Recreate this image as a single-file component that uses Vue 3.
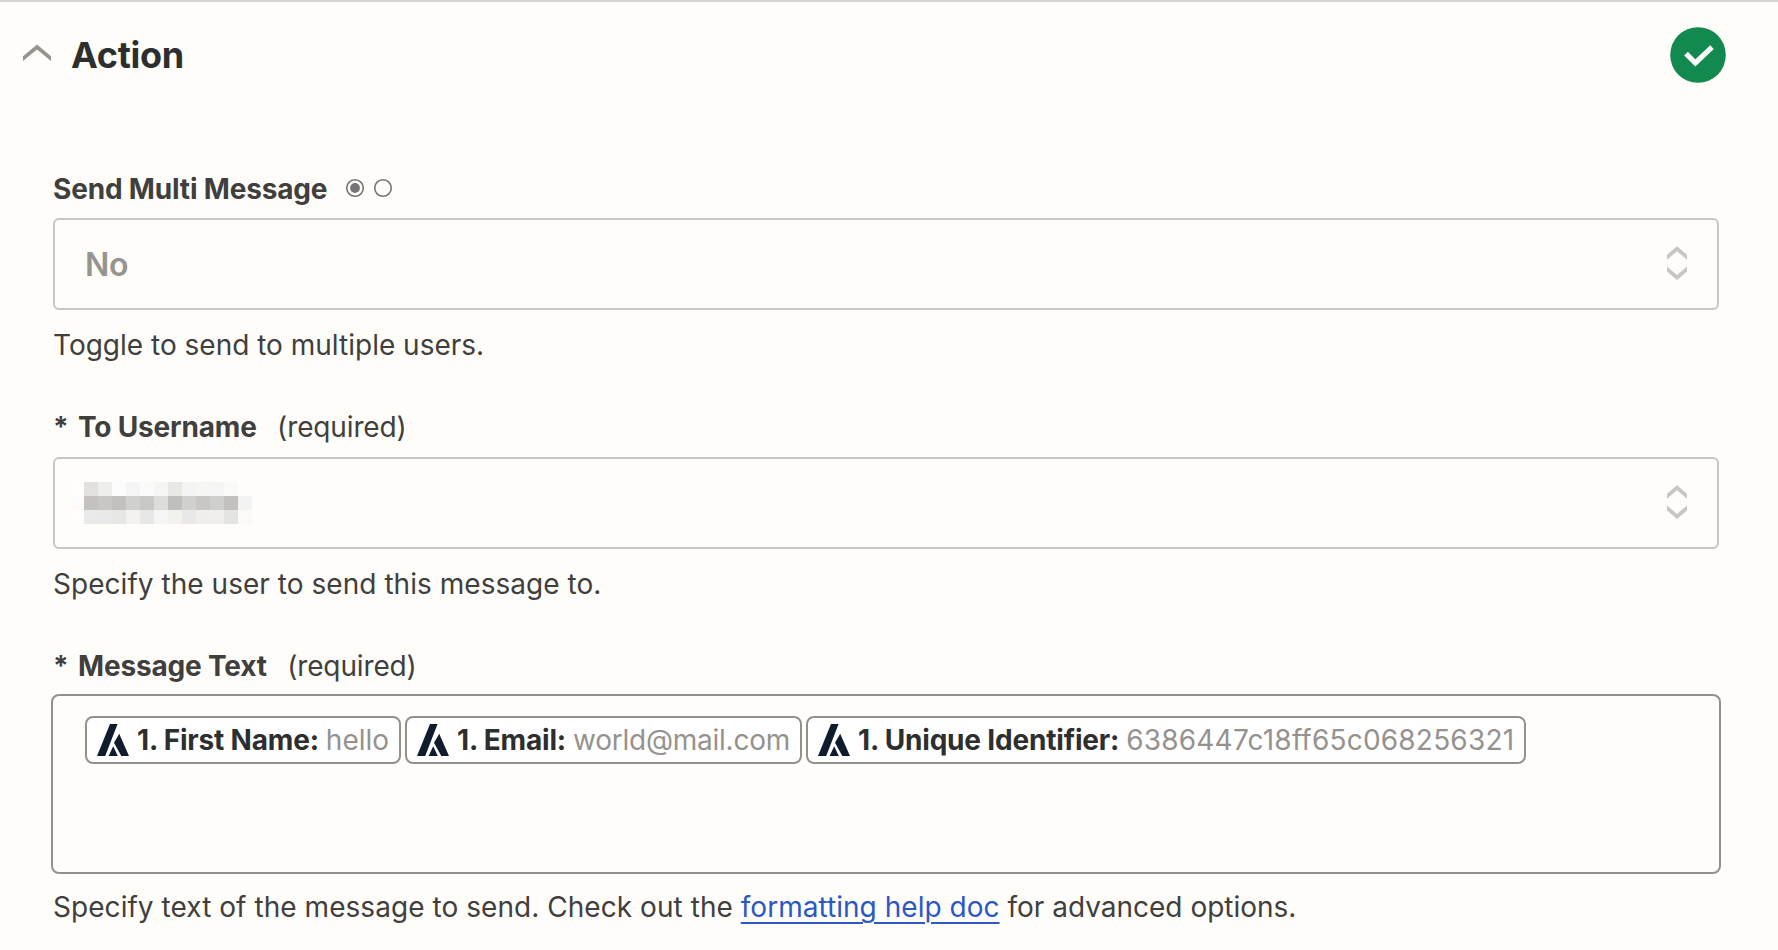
<script setup>
const chips = [
  { id: 'first', name: '1. First Name:', value: 'hello' },
  { id: 'email', name: '1. Email:', value: 'world@mail.com' },
  { id: 'unique', name: '1. Unique Identifier:', value: '6386447c18ff65c068256321' },
]

// Shades of the obscured user name, one entry per block
const mask = [
  '#fffefb', '#e2e1de', '#eeeeed', '#fcfcfc', '#f5f5f5', '#fafafa', '#f5f5f3', '#e8e8e5', '#f4f4f4', '#f6f6f3', '#f5f5f5', '#fafaf9', '#fffdf9',
  '#fbfbfb', '#c3c2be', '#c8c7c4', '#c2c1bd', '#d0d0cf', '#c8c8c7', '#dcdcdb', '#c0bfbe', '#d0d0cd', '#c8c7c3', '#cfcfcc', '#c2c1be', '#f3f3f3',
  '#fffefb', '#eaeaea', '#e9e9e9', '#e6e6e5', '#f3f2ef', '#e7e7e6', '#f5f5f5', '#f2f1ee', '#e8e8e8', '#efeeec', '#f0efed', '#e4e4e3', '#fbfaf8',
]
</script>

<template>
  <main class="panel">
    <header class="header">
      <svg class="chevron" width="28" height="18" viewBox="0 0 28 18">
        <path d="M0 12.2 14 .6 28 12.2V17L14 5.6 0 17Z" fill="#959490" />
      </svg>
      <h2 class="title">Action</h2>
      <svg class="status" width="56" height="56" viewBox="0 0 56 56">
        <circle cx="28" cy="28" r="27.8" fill="#12894f" />
        <path d="M16 26.7 25.4 36 42 20.2" fill="none" stroke="#fffdf9" stroke-width="5.2" />
      </svg>
    </header>

    <section class="field">
      <div class="label">
        <span class="name">Send Multi Message</span>
        <span class="radios">
          <svg width="48" height="20" viewBox="0 0 48 20">
            <circle cx="10" cy="10" r="8.3" fill="none" stroke="#757575" stroke-width="1.6" />
            <circle cx="10" cy="10" r="4.9" fill="#757575" />
            <circle cx="38" cy="10" r="8.3" fill="none" stroke="#757575" stroke-width="1.6" />
          </svg>
        </span>
      </div>
      <div class="select first">
        <span class="value">No</span>
        <svg class="carets" width="20" height="34" viewBox="0 0 20 34">
          <path d="M0 8.8 10 .3 20 8.8V13.8L10 5.3 0 13.8ZM0 20.4 10 28.9 20 20.4V25.4L10 33.9 0 25.4Z" fill="#c7c6c3" />
        </svg>
      </div>
      <p class="help">Toggle to send to multiple users.</p>
    </section>

    <section class="field second">
      <div class="label">
        <span class="star">*</span><span class="name">To Username</span><span class="required">(required)</span>
      </div>
      <div class="select">
        <div class="mask">
          <i v-for="(c, i) in mask" :key="i" :style="{ background: c }"></i>
        </div>
        <svg class="carets" width="20" height="34" viewBox="0 0 20 34">
          <path d="M0 8.8 10 .3 20 8.8V13.8L10 5.3 0 13.8ZM0 20.4 10 28.9 20 20.4V25.4L10 33.9 0 25.4Z" fill="#c7c6c3" />
        </svg>
      </div>
      <p class="help">Specify the user to send this message to.</p>
    </section>

    <section class="field third">
      <div class="label">
        <span class="star">*</span><span class="name">Message Text</span><span class="required">(required)</span>
      </div>
      <div class="editor">
        <span v-for="chip in chips" :key="chip.id" class="chip" :class="chip.id">
          <svg class="logo" width="32" height="32" viewBox="0 0 32 32">
            <path d="M13 0H20.6L8.2 32H0ZM22.2 9.8 32 32H24.3L17 18.8ZM16.2 22.2 20.8 32H11.6Z" fill="#0f1c2e" />
          </svg>
          <b>{{ chip.name }}</b><em>{{ chip.value }}</em>
        </span>
      </div>
      <p class="help"><span class="lead">Specify text of the message to send. Check out the </span><a href="#">formatting help doc</a> for advanced options.</p>
    </section>
  </main>
</template>

<style>
body {
  background: #fffdf9;
}
</style>

<style scoped>
.panel {
  box-sizing: border-box;
  height: 950px;
  overflow: hidden;
  border-top: 2px solid #d6d5d2;
  background: #fffdf9;
  color: #403f3e;
  font-family: Inter, "Liberation Sans", sans-serif;
  font-size: 28px;
  line-height: 40px;
}
.header {
  display: flex;
  align-items: center;
  height: 106px;
  padding: 0 52px 0 23px;
}
.chevron {
  margin-bottom: 4px;
}
.title {
  margin: 0 auto 0 20px;
  color: #2d2e2e;
  font-size: 36px;
  font-weight: 650;
  letter-spacing: -0.3px;
  line-height: 44px;
}
.field {
  margin: 61px 59px 0 53px;
}
.field.second {
  margin-top: 42px;
}
.field.third {
  margin-top: 42px;
}
.label {
  display: flex;
  height: 40px;
  white-space: nowrap;
}
.name,
.star {
  font-weight: 660;
}
.name {
  letter-spacing: -0.18px;
}
.star {
  width: 25px;
}
.required {
  margin-left: 20.4px;
  letter-spacing: -0.13px;
}
.radios {
  display: flex;
  margin: 9px 0 0 18.2px;
}
.select {
  box-sizing: border-box;
  display: flex;
  align-items: center;
  justify-content: space-between;
  height: 92px;
  margin-top: 10px;
  padding: 0 30px;
  border: 2px solid #c7c6c3;
  border-radius: 6px;
}
.select.first {
  margin-top: 9px;
}
.value {
  padding-top: 2px;
  color: #959490;
  font-size: 32px;
  font-weight: 580;
  letter-spacing: -0.2px;
}
.carets {
  margin-bottom: 2px;
}
.mask {
  display: grid;
  grid-template-columns: 11px repeat(12, 14px);
  grid-auto-rows: 14px;
  margin-left: -12px;
}
.help {
  margin: 15px 0 0;
  white-space: nowrap;
}
.second .help {
  letter-spacing: 0.04px;
}
.editor {
  box-sizing: border-box;
  display: flex;
  align-items: flex-start;
  gap: 4px;
  height: 180px;
  margin: 8px -2px 0;
  padding: 20px 32px;
  border: 2px solid #92918d;
  border-radius: 8px;
}
.chip {
  box-sizing: border-box;
  display: flex;
  align-items: center;
  height: 48px;
  padding: 0 10px;
  border: 2px solid #92918d;
  border-radius: 8px;
  background: #fff;
  white-space: nowrap;
}
.chip b {
  margin: 0 7px 0 8px;
  color: #2d2e2e;
  font-weight: 650;
  letter-spacing: -0.18px;
}
.chip em {
  color: #95928e;
  font-style: normal;
}
.chip.email em {
  letter-spacing: -0.24px;
}
.chip.unique em {
  letter-spacing: 0.2px;
}
.third .help {
  margin-top: 13px;
}
.lead {
  letter-spacing: 0.05px;
}
.help a {
  color: #2b58c4;
  letter-spacing: 0.03px;
  text-decoration: underline;
  text-decoration-thickness: 2px;
  text-underline-offset: 5px;
}
</style>
